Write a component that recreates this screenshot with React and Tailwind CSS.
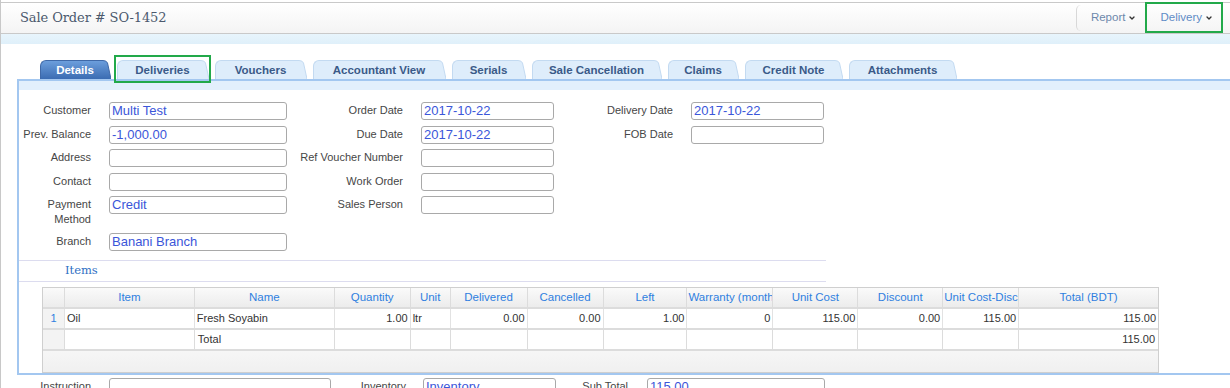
import { ChevronDown } from "lucide-react";

const tabs = [
  { label: "Details", w: 71, active: true },
  { label: "Deliveries", w: 92 },
  { label: "Vouchers", w: 92 },
  { label: "Accountant View", w: 133 },
  { label: "Serials", w: 74 },
  { label: "Sale Cancellation", w: 130 },
  { label: "Claims", w: 71 },
  { label: "Credit Note", w: 98 },
  { label: "Attachments", w: 108 },
];

const cols = [
  { key: "no", title: "", w: 22 },
  { key: "item", title: "Item", w: 130 },
  { key: "name", title: "Name", w: 140 },
  { key: "qty", title: "Quantity", w: 76 },
  { key: "unit", title: "Unit", w: 40 },
  { key: "delivered", title: "Delivered", w: 77 },
  { key: "cancelled", title: "Cancelled", w: 76 },
  { key: "left", title: "Left", w: 84 },
  { key: "warranty", title: "Warranty (months)", w: 86 },
  { key: "cost", title: "Unit Cost", w: 85 },
  { key: "discount", title: "Discount", w: 85 },
  { key: "costDisc", title: "Unit Cost-Discount", w: 76 },
  { key: "total", title: "Total (BDT)", w: 139 },
];

const row = {
  no: "1",
  item: "Oil",
  name: "Fresh Soyabin",
  qty: "1.00",
  unit: "ltr",
  delivered: "0.00",
  cancelled: "0.00",
  left: "1.00",
  warranty: "0",
  cost: "115.00",
  discount: "0.00",
  costDisc: "115.00",
  total: "115.00",
};

const leftAligned = ["item", "name", "unit"];

function Tab({ label, w, active }) {
  const fill = active ? "url(#tabActive)" : "#deedfb";
  const stroke = active ? "#3f69a8" : "#c3daf1";
  return (
    <div className="flex items-end h-[19px]" style={{ width: w }}>
      <div
        className={`flex-1 h-[19px] rounded-tl-[6px] border-t border-l flex items-center justify-center pl-[6px] pt-[1px] text-[11.5px] font-bold ${
          active
            ? "bg-gradient-to-b from-[#6c9edc] to-[#3b6cb2] border-[#3f69a8] text-white"
            : "bg-[#deedfb] border-[#c3daf1] text-[#3a5a88]"
        }`}
      >
        {label}
      </div>
      <svg width="8" height="19" viewBox="0 0 8 19" className="block">
        <defs>
          <linearGradient id="tabActive" x1="0" y1="0" x2="0" y2="1">
            <stop offset="0" stopColor="#6c9edc" />
            <stop offset="1" stopColor="#3b6cb2" />
          </linearGradient>
        </defs>
        <path d="M0 0.5 Q3.5 0.5 4.5 3 L8 19 L0 19 Z" fill={fill} />
        <path d="M0 0.5 Q3.5 0.5 4.5 3 L8 19" fill="none" stroke={stroke} strokeWidth="1" />
      </svg>
    </div>
  );
}

function Field({ value, w }) {
  return (
    <div
      className="h-[18px] border border-[#a9a9a9] rounded-[3px] px-[2px] text-[13px] leading-[16px] text-[#3b56d9] whitespace-nowrap overflow-hidden bg-white"
      style={{ width: w }}
    >
      {value}
    </div>
  );
}

function FormColumn({ labelW, inputW, rows }) {
  return (
    <div className="flex flex-col gap-[5.5px]">
      {rows.map((r) => (
        <div key={r.label} className="flex gap-[18px]">
          <div
            className="text-right text-[11px] leading-[15px] pt-[1px] text-[#464646]"
            style={{ width: labelW }}
          >
            {r.label.split("\n").map((l) => (
              <div key={l}>{l}</div>
            ))}
          </div>
          <Field value={r.value} w={inputW} />
        </div>
      ))}
    </div>
  );
}

export default function App() {
  return (
    <div className="relative w-[1230px] h-[388px] overflow-hidden bg-white border-l border-[#c8c8c8] font-['Liberation_Sans',Arial,sans-serif]">
      {/* Header */}
      <div className="h-[2px]" />
      <div className="h-[32px] border-t border-b border-[#c9c9c9] bg-gradient-to-b from-white to-[#f4f4f4] flex items-center justify-between pl-[19px]">
        <h1 className="font-['DejaVu_Serif',serif] text-[13px] text-[#4b596d] tracking-[-0.1px]">
          Sale Order # SO-1452
        </h1>
        <div className="flex items-stretch h-[26px] mr-[9px]">
          <div className="flex items-center gap-[3px] pl-[14px] pr-[2px] border-l border-[#d8d8d8] rounded-l-[5px] text-[11.5px] text-[#6d88ab]">
            Report <ChevronDown size={8} strokeWidth={4} className="text-[#333]" />
          </div>
          <div className="flex items-center gap-[3px] ml-[7px] pl-[14px] pr-[8px] border-l border-[#d8d8d8] rounded-l-[5px] text-[11.5px] text-[#5f8cc6]">
            Delivery <ChevronDown size={8} strokeWidth={4} className="text-[#333]" />
          </div>
        </div>
      </div>
      <div className="h-[10px] bg-gradient-to-b from-[#e8f5fc] to-[#dff0fa]" />

      {/* Tabs */}
      <div className="flex gap-[6px] pl-[39px] mt-[16px]">
        {tabs.map((t) => (
          <Tab key={t.label} {...t} />
        ))}
      </div>

      {/* Panel */}
      <div className="ml-[16px] w-[1230px] border-t-2 border-l-2 border-b-2 border-[#a3c7f0]">
        <div className="h-[9px] bg-[#e2effc]" />

        <div className="flex pt-[12px]">
          <FormColumn
            labelW={72}
            inputW={178}
            rows={[
              { label: "Customer", value: "Multi Test" },
              { label: "Prev. Balance", value: "-1,000.00" },
              { label: "Address", value: "" },
              { label: "Contact", value: "" },
              { label: "Payment\nMethod", value: "Credit" },
              { label: "Branch", value: "Banani Branch" },
            ]}
          />
          <FormColumn
            labelW={116}
            inputW={133}
            rows={[
              { label: "Order Date", value: "2017-10-22" },
              { label: "Due Date", value: "2017-10-22" },
              { label: "Ref Voucher Number", value: "" },
              { label: "Work Order", value: "" },
              { label: "Sales Person", value: "" },
            ]}
          />
          <FormColumn
            labelW={119}
            inputW={133}
            rows={[
              { label: "Delivery Date", value: "2017-10-22" },
              { label: "FOB Date", value: "" },
            ]}
          />
        </div>

        {/* Items heading */}
        <div className="mt-[9px] w-[807px] border-t border-b border-[#dcdcef] h-[22px] flex items-center pl-[46px]">
          <span className="font-['DejaVu_Serif',serif] text-[11.5px] text-[#2f6fc4]">Items</span>
        </div>

        {/* Table */}
        <div className="ml-[23px] mt-[5px] w-[1117px] border border-[#cfcfcf] text-[11px]">
          <div className="flex h-[21px] bg-gradient-to-b from-[#fafafa] to-[#ececec] border-b-2 border-[#dcdcdc]">
            {cols.map((c) => (
              <div
                key={c.key}
                className="border-r border-[#dcdcdc] last:border-r-0 overflow-hidden whitespace-nowrap text-center text-[11.5px] leading-[19px] text-[#2f7fe0] px-[1px]"
                style={{ width: c.w }}
              >
                {c.title}
              </div>
            ))}
          </div>
          <div className="flex h-[21px] border-b-2 border-[#dcdcdc] bg-white text-[#333]">
            {cols.map((c) => (
              <div
                key={c.key}
                className={`border-r border-[#e2e2e2] last:border-r-0 flex items-center overflow-hidden whitespace-nowrap px-[2px] ${
                  c.key === "no"
                    ? "justify-center bg-[#f3f3f3] text-[#2f7fe0] border-[#dcdcdc]"
                    : leftAligned.includes(c.key)
                    ? "justify-start"
                    : "justify-end"
                }`}
                style={{ width: c.w }}
              >
                {row[c.key]}
              </div>
            ))}
          </div>
          <div className="flex h-[21px] border-b-2 border-[#dcdcdc] bg-white text-[#333]">
            {cols.map((c) => (
              <div
                key={c.key}
                className={`border-r border-[#dcdcdc] last:border-r-0 flex items-center px-[3px] ${
                  c.key === "no" ? "bg-[#f3f3f3]" : ""
                } ${c.key === "total" ? "justify-end" : "justify-start"}`}
                style={{ width: c.w }}
              >
                {c.key === "name" ? "Total" : c.key === "total" ? "115.00" : ""}
              </div>
            ))}
          </div>
          <div className="h-[21px] bg-gradient-to-b from-[#f6f6f6] to-[#f0f0f0]" />
        </div>
      </div>

      {/* Footer fields (cut off) */}
      <div className="flex pt-[3px] text-[11px] text-[#464646]">
        <div className="w-[90px] text-right leading-[15px] pt-[1px]">Instruction</div>
        <div className="ml-[18px]">
          <Field value="" w={222} />
        </div>
        <div className="w-[75px] text-right leading-[15px] pt-[1px]">Inventory</div>
        <div className="ml-[17px]">
          <Field value="Inventory" w={133} />
        </div>
        <div className="w-[72px] text-right leading-[15px] pt-[1px]">Sub Total</div>
        <div className="ml-[19px]">
          <Field value="115.00" w={178} />
        </div>
      </div>

      {/* Highlight boxes */}
      <div className="absolute left-[1144px] top-[2px] w-[78px] h-[31px] border-2 border-[#22a94a]" />
      <div className="absolute left-[113px] top-[55px] w-[97px] h-[28px] border-2 border-[#22a94a]" />
    </div>
  );
}
